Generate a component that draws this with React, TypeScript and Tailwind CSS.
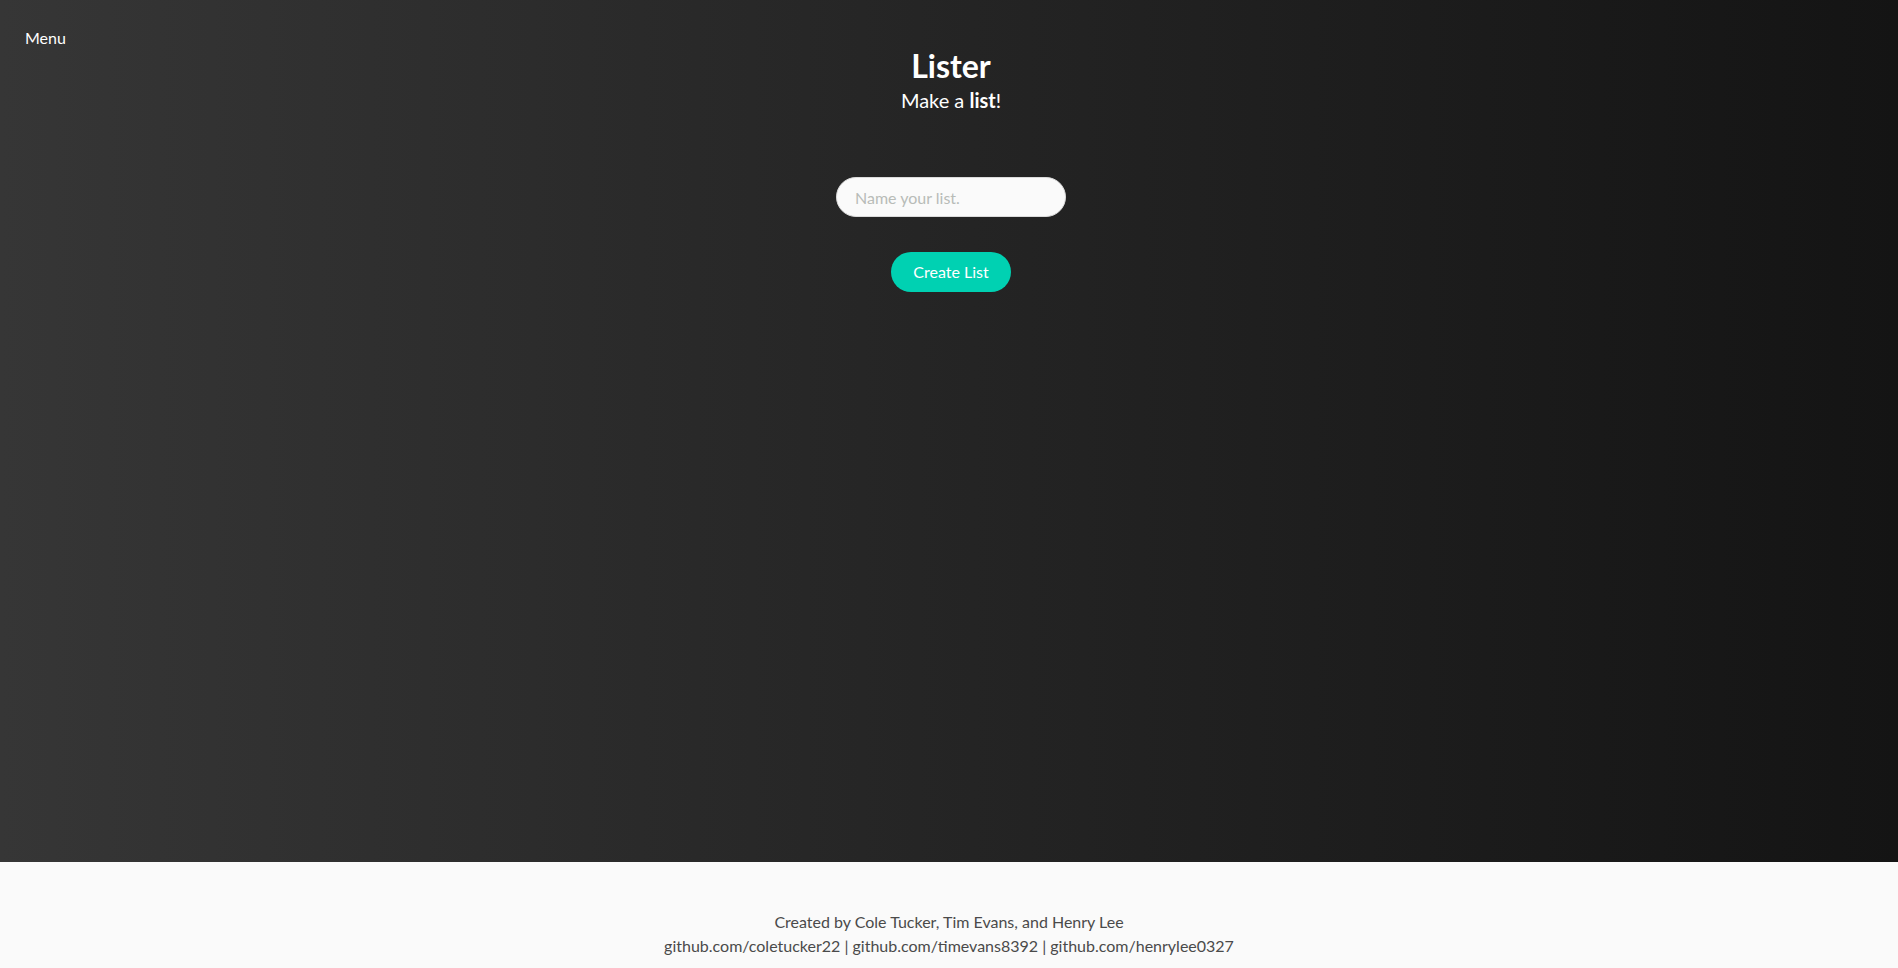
import React, { useState } from 'react';

export default function App() {
  const [name, setName] = useState('');

  return (
    <div className="min-h-screen flex flex-col font-['Lato','Liberation_Sans',sans-serif]">
      <section className="h-[862px] shrink-0 bg-gradient-to-r from-[#363636] to-[#141414] text-white">
        <nav className="pt-[26px] pl-[25px]">
          <a className="text-[16px] leading-6 text-white cursor-pointer">Menu</a>
        </nav>

        <div className="flex flex-col items-center -mt-[2px] pl-[4px]">
          <h1 className="text-[32px] leading-[36px] font-bold">Lister</h1>
          <h2 className="text-[20px] leading-[25px] mt-[4px]">
            Make a <strong className="font-bold">list</strong>!
          </h2>

          <input
            className="mt-[64px] w-[230px] h-[40px] rounded-full bg-[#fafafa] border border-[#dbdbdb] pl-[18px] text-[16px] text-[#363636] placeholder:text-[#b8bcb8] outline-none"
            placeholder="Name your list."
            value={name}
            onChange={(e) => setName(e.target.value)}
          />

          <button className="mt-[35px] w-[120px] h-[40px] rounded-full bg-[#00d1b2] text-white text-[16px]">
            Create List
          </button>
        </div>
      </section>

      <footer className="bg-[#fafafa] pt-12 pb-24 text-center text-[16px] leading-6 text-[#4a4a4a]">
        <p>Created by Cole Tucker, Tim Evans, and Henry Lee</p>
        <p>github.com/coletucker22 | github.com/timevans8392 | github.com/henrylee0327</p>
      </footer>
    </div>
  );
}
